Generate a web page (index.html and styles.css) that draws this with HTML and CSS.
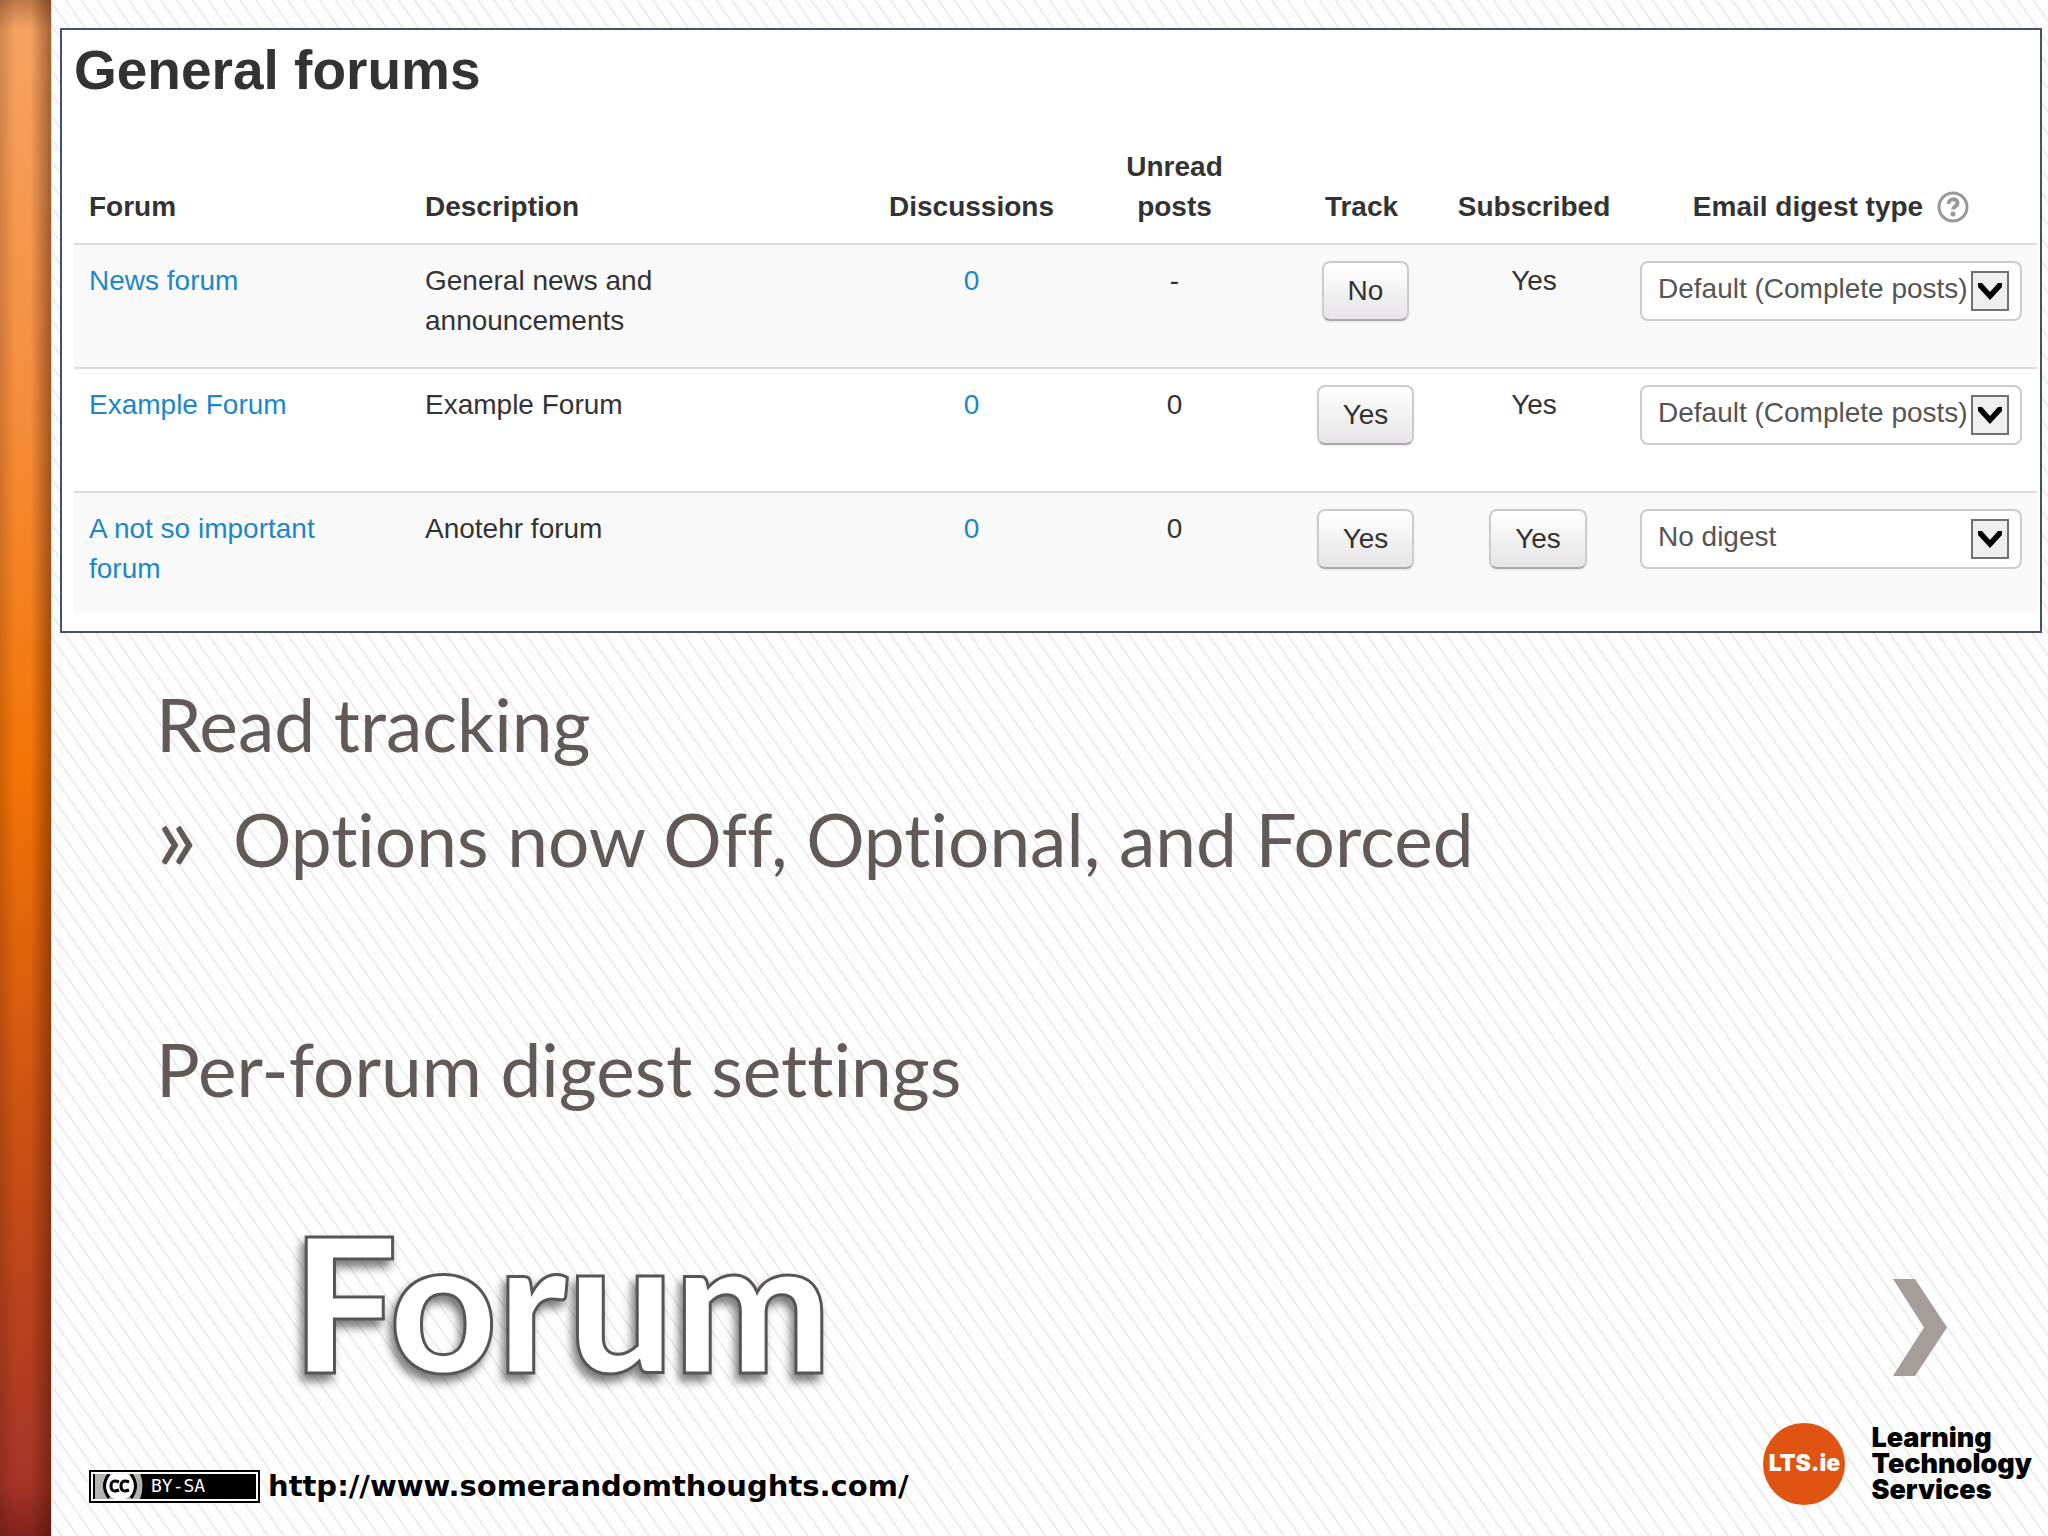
FILE: index.html
```html
<!DOCTYPE html>
<html lang="en">
<head>
  <meta charset="UTF-8">
  <title>Forum</title>
  <link rel="stylesheet" href="styles.css">
</head>
<body>
  <div class="accent"></div>

  <main class="slide">
    <!-- Forum list -->
    <section class="panel">
      <h2>General forums</h2>
      <table class="forums">
        <colgroup>
          <col class="col-forum">
          <col class="col-desc">
          <col class="col-disc">
          <col class="col-unread">
          <col class="col-track">
          <col class="col-sub">
          <col class="col-digest">
        </colgroup>
        <thead>
          <tr>
            <th class="left">Forum</th>
            <th class="left">Description</th>
            <th>Discussions</th>
            <th>Unread<br>posts</th>
            <th>Track</th>
            <th>Subscribed</th>
            <th>
              <span class="digest-head">Email digest type
                <svg class="help" viewBox="0 0 32 32" aria-hidden="true">
                  <circle cx="16" cy="16" r="14" fill="none" stroke="#999" stroke-width="3"/>
                  <path d="M11.500 13c0-6 9-6 9-1 0 3.500-4.500 3.500-4.500 6.500" fill="none" stroke="#999" stroke-width="4"/>
                  <circle cx="16" cy="23" r="2.500" fill="#999"/>
                </svg>
              </span>
            </th>
          </tr>
        </thead>
        <tbody>
          <tr>
            <td class="left"><a href="#">News forum</a></td>
            <td class="left">General news and<br>announcements</td>
            <td><a href="#">0</a></td>
            <td>-</td>
            <td><button class="btn" type="button">No</button></td>
            <td>Yes</td>
            <td>
              <div class="select">
                <select aria-label="Email digest type, News forum">
                  <option>Default (Complete posts)</option>
                  <option>No digest</option>
                </select>
                <svg class="arrow" viewBox="0 0 38 40" aria-hidden="true"><rect x="1" y="1" width="36" height="38" fill="#efefef" stroke="#707070" stroke-width="2"/><path d="M7 12h4l8 9 8-9h4v4L19 29 7 16z"/></svg>
              </div>
            </td>
          </tr>
          <tr>
            <td class="left"><a href="#">Example Forum</a></td>
            <td class="left">Example Forum</td>
            <td><a href="#">0</a></td>
            <td>0</td>
            <td><button class="btn" type="button">Yes</button></td>
            <td>Yes</td>
            <td>
              <div class="select">
                <select aria-label="Email digest type, Example Forum">
                  <option>Default (Complete posts)</option>
                  <option>No digest</option>
                </select>
                <svg class="arrow" viewBox="0 0 38 40" aria-hidden="true"><rect x="1" y="1" width="36" height="38" fill="#efefef" stroke="#707070" stroke-width="2"/><path d="M7 12h4l8 9 8-9h4v4L19 29 7 16z"/></svg>
              </div>
            </td>
          </tr>
          <tr>
            <td class="left"><a href="#">A not so important forum</a></td>
            <td class="left">Anotehr forum</td>
            <td><a href="#">0</a></td>
            <td>0</td>
            <td><button class="btn" type="button">Yes</button></td>
            <td><button class="btn" type="button">Yes</button></td>
            <td>
              <div class="select">
                <select aria-label="Email digest type, A not so important forum">
                  <option>No digest</option>
                  <option>Default (Complete posts)</option>
                </select>
                <svg class="arrow" viewBox="0 0 38 40" aria-hidden="true"><rect x="1" y="1" width="36" height="38" fill="#efefef" stroke="#707070" stroke-width="2"/><path d="M7 12h4l8 9 8-9h4v4L19 29 7 16z"/></svg>
              </div>
            </td>
          </tr>
        </tbody>
      </table>
    </section>

    <!-- Talking points -->
    <section class="points">
      <p>Read tracking</p>
      <ul>
        <li>Options now Off, Optional, and Forced</li>
      </ul>
      <p class="spaced">Per-forum digest settings</p>
    </section>

    <div class="title-row">
      <h1>Forum</h1>
      <svg class="chevron" viewBox="0 0 54 97" aria-hidden="true"><path d="M0 0h22l32 48.500L22 97H0l31-48.500z" fill="#a69d9b"/></svg>
    </div>

    <footer>
      <div class="credit">
        <span class="cc">
          <svg class="cc-mark" viewBox="0 0 50 26" aria-hidden="true">
            <path d="M0 0h45q5 13 0 26H0z" fill="#b4b4ae"/>
            <circle cx="25" cy="13" r="14" fill="#fff"/>
            <path d="M14 1q-9 12 0 24M36 1q9 12 0 24" fill="none" stroke="#000" stroke-width="3"/>
            <path d="M24 9q-8-3-8 4t8 4M34 9q-8-3-8 4t8 4" fill="none" stroke="#000" stroke-width="3"/>
          </svg>
          <span class="cc-text">BY-SA</span>
        </span>
        <a class="site" href="http://www.somerandomthoughts.com/">http://www.somerandomthoughts.com/</a>
      </div>
      <div class="brand">
        <span class="brand-mark">LTS.ie</span>
        <span class="brand-name">Learning<br>Technology<br>Services</span>
      </div>
    </footer>
  </main>
</body>
</html>
```

FILE: styles.css
```css
*{ box-sizing:border-box; }
body{
  margin:0;
  min-height:100vh;
  display:flex;
  font-family:"Liberation Sans", Arial, sans-serif;
  font-size:28px;
  line-height:40px;
  color:#333;
  background:repeating-linear-gradient(55deg, #fefdfe 0 10px, #e8e6e8 12px, #fefdfe 13px);
}
a{ color:#1c87c9; text-decoration:none; }

.accent{
  flex:none;
  width:52px;
  border-right:1px solid #f7d3b4;
  background:
    linear-gradient(rgba(60,20,0,.3), transparent 30px, transparent calc(100% - 50px), rgba(60,0,0,.3)),
    linear-gradient(90deg, rgba(60,20,0,.2), transparent 30% 60%, rgba(60,20,0,.45)),
    linear-gradient(#f5a465, #f58f3e 25%, #f47405 50%, #c84f14 75%, #a1302a);
}
.slide{
  flex:1;
  min-width:0;
  display:flex;
  flex-direction:column;
}

.panel{
  margin:28px 6px 0 8px;
  padding:10px 3px 18px 12px;
  border:2px solid #46506a;
  background:#fff;
}
h2{
  margin:0 0 39px;
  font-size:55px;
  line-height:60px;
}
.forums{
  width:100%;
  table-layout:fixed;
  border-collapse:collapse;
}
.col-forum{ width:336px; }
.col-desc{ width:464px; }
.col-disc{ width:195px; }
.col-unread{ width:211px; }
.col-track{ width:163px; }
.col-sub{ width:182px; }
th, td{ padding:16px 15px; text-align:center; vertical-align:top; }
th{ vertical-align:bottom; padding:8px 4px 16px; }
td{ height:124px; border-top:2px solid #dcdcde; }
tr:last-child td{ height:121px; }
.forums .left{ text-align:left; padding-left:15px; padding-right:32px; }
tbody tr:nth-child(odd){ background:#f9f9fa; }
.digest-head{
  display:flex;
  justify-content:center;
  align-items:center;
  gap:14px;
}
.help{ width:32px; height:32px; }
.btn{
  height:60px;
  margin-left:8px;
  padding:0 24px;
  font:inherit;
  color:#333;
  border:2px solid #ccc;
  border-bottom-color:#aaa;
  border-radius:8px;
  background:linear-gradient(#fff, #e6e4e6);
  box-shadow:0 1px 2px rgba(0,0,0,.1);
}
.select{ display:grid; align-items:center; }
.select select, .select .arrow{ grid-area:1 / 1; }
.select select{
  appearance:none;
  width:100%;
  height:60px;
  padding:0 16px 4px;
  font:inherit;
  color:#555;
  border:2px solid #ccc;
  border-radius:8px;
  background:#fff;
}
.arrow{
  justify-self:end;
  width:38px;
  height:40px;
  margin-right:13px;
  pointer-events:none;
}

.points{
  padding:34px 104px 0;
  font-family:Lato, sans-serif;
  font-size:73px;
  line-height:115px;
  font-variant-ligatures:none;
  color:#635a58;
}
.points p, .points ul{ margin:0; padding:0; }
.points li{ display:flex; }
.points li::before{
  content:"»";
  width:77px;
  font-size:96px;
  line-height:104px;
}
.points .spaced{ margin-top:115px; }

.title-row{
  flex:1;
  display:flex;
  justify-content:space-between;
  align-items:center;
  padding:52px 101px 0 240px;
}
h1{
  margin:0;
  font-family:Lato, sans-serif;
  font-weight:900;
  font-size:187px;
  line-height:200px;
  color:#fff;
  -webkit-text-stroke:3px #595554;
  filter:drop-shadow(-4px 7px 4px rgba(0,0,0,.5));
}
.chevron{ width:54px; height:97px; margin-top:54px; }

footer{
  display:flex;
  justify-content:space-between;
  align-items:center;
  padding:0 16px 30px 37px;
}
.credit{ display:flex; align-items:center; gap:8px; margin-top:44px; }
.cc{
  display:flex;
  align-items:center;
  width:171px;
  height:33px;
  border:2px solid #000;
  outline:2px solid #fff;
  outline-offset:-4px;
  padding:2px;
  background:#000;
}
.cc-mark{ width:54px; height:26px; }
.cc-text{
  margin-left:4px;
  font:18px/24px "DejaVu Sans Mono", monospace;
  color:#fff;
}
.site{
  font:bold 29px/40px "DejaVu Sans", sans-serif;
  color:#000;
}
.brand{ display:flex; align-items:center; gap:26px; }
.brand-mark{
  width:82px;
  height:82px;
  border-radius:50%;
  background:#de5410;
  color:#fff;
  text-align:center;
  font:900 23px/80px Inter, sans-serif;
}
.brand-name{
  font:900 27px/26px Inter, sans-serif;
  color:#000;
}
```
